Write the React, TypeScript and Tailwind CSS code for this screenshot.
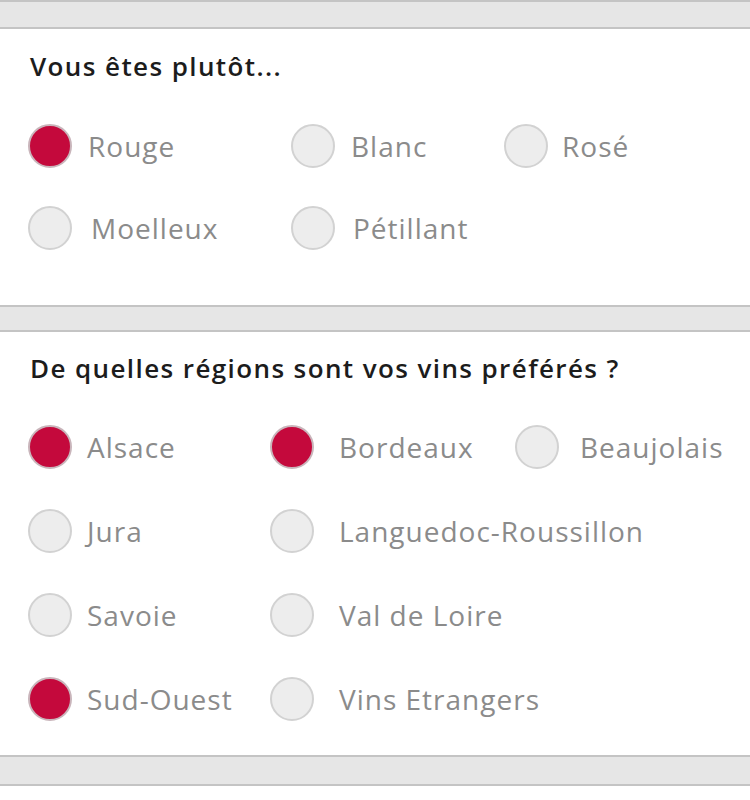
const groups = [
  {
    title: "Vous êtes plutôt...",
    cols: "grid-cols-[263px_213px_1fr]",
    pad: "pt-[22px] pb-[55px]",
    rowGap: "gap-y-[38px]",
    titleGap: "mt-[43px]",
    items: [
      { label: "Rouge", on: true, ml: "ml-4" },
      { label: "Blanc", on: false, ml: "ml-4" },
      { label: "Rosé", on: false, ml: "ml-[14px]" },
      { label: "Moelleux", on: false, ml: "ml-[19px]" },
      { label: "Pétillant", on: false, ml: "ml-[18px]" },
    ],
  },
  {
    title: "De quelles régions sont vos vins préférés ?",
    cols: "grid-cols-[242px_245px_1fr]",
    pad: "pt-[21px] pb-[34px]",
    rowGap: "gap-y-[40px]",
    titleGap: "mt-[42px]",
    items: [
      { label: "Alsace", on: true, ml: "ml-[15px]" },
      { label: "Bordeaux", on: true, ml: "ml-[25px]" },
      { label: "Beaujolais", on: false, ml: "ml-[21px]" },
      { label: "Jura", on: false, ml: "ml-[15px]" },
      { label: "Languedoc-Roussillon", on: false, ml: "ml-[25px]" },
      { label: "", on: null, ml: "" },
      { label: "Savoie", on: false, ml: "ml-[15px]" },
      { label: "Val de Loire", on: false, ml: "ml-[25px]" },
      { label: "", on: null, ml: "" },
      { label: "Sud-Ouest", on: true, ml: "ml-[15px]" },
      { label: "Vins Etrangers", on: false, ml: "ml-[25px]" },
    ],
  },
];

function Band({ h }: { h: string }) {
  return <div className={`${h} border-y-2 border-[#c4c4c4] bg-[#e6e6e6]`} />;
}

function Option({ label, on, ml }: { label: string; on: boolean | null; ml: string }) {
  if (on === null) return <div />;
  return (
    <div className="flex h-[44px] items-center">
      <span
        className={`h-[44px] w-[44px] shrink-0 rounded-full border-2 ${
          on ? "border-[#c9b5bb] bg-[#c4093c]" : "border-[#d2d2d2] bg-[#ededed]"
        }`}
      />
      <span className={`${ml} whitespace-nowrap text-[28px] leading-none tracking-[1px] text-[#8b8b8b]`}>
        {label}
      </span>
    </div>
  );
}

export default function App() {
  return (
    <div className="min-h-[800px] w-[750px] bg-white" style={{ fontFamily: "'Open Sans', 'Noto Sans', sans-serif" }}>
      <Band h="h-[29px]" />
      {groups.map((g, i) => (
        <div key={g.title}>
          <section className={`px-7 ${g.pad}`}>
            <h2 className="pl-[2px] text-[26px] font-semibold leading-[30px] tracking-[1.4px] text-[#1c1c1c]">
              {g.title}
            </h2>
            <div className={`${g.titleGap} grid ${g.cols} ${g.rowGap}`}>
              {g.items.map((it, j) => (
                <Option key={j} {...it} />
              ))}
            </div>
          </section>
          <Band h={i === 0 ? "h-[27px]" : "h-[31px]"} />
        </div>
      ))}
    </div>
  );
}
